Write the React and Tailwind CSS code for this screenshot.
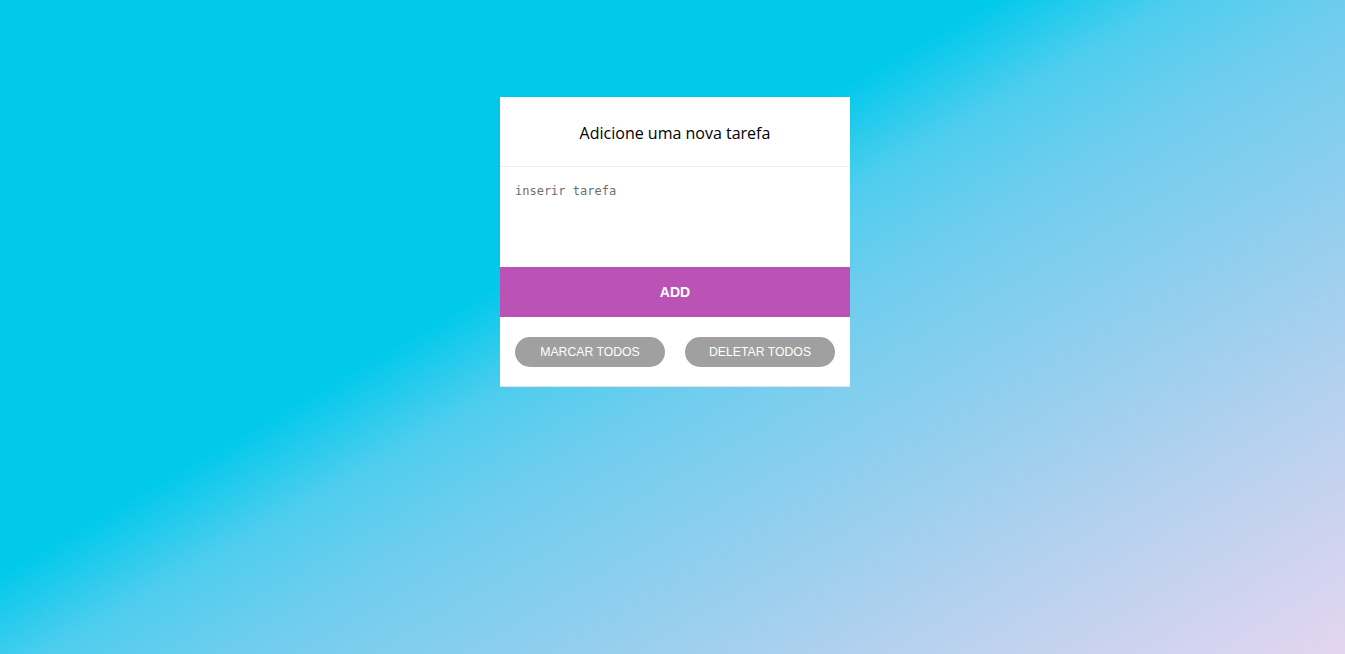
import React, { useState } from 'react';

const App = () => {
  const [tarefa, setTarefa] = useState('');

  return (
    <div className="min-h-screen w-full bg-[linear-gradient(150deg,#00c9eb_40%,#4ecdee_47.5%,#6fcdee_55%,#9ccfee_72%,#e4d5f0_100%)] flex items-start justify-center pt-[97px] pl-[5px]">
      <div className="w-[350px] bg-white flex flex-col border-b border-[#e6e6e6]">
        <div className="h-[70px] flex items-center justify-center border-b border-[#ececec]">
          <h1 className="text-[16px] text-black font-['Open_Sans',sans-serif] pt-[2px]">Adicione uma nova tarefa</h1>
        </div>
        <textarea
          className="h-[100px] w-full resize-none outline-none px-[15px] pt-[15px] text-[12px] text-[#555] placeholder-[#6e6e6e] font-['DejaVu_Sans_Mono',monospace]"
          placeholder="inserir tarefa"
          value={tarefa}
          onChange={(e) => setTarefa(e.target.value)}
        />
        <button className="h-[50px] w-full bg-[#ba53b5] text-white font-bold text-[14px] font-['Liberation_Sans',Arial,sans-serif]">
          ADD
        </button>
        <div className="h-[69px] flex items-center justify-between px-[15px] pt-[1px]">
          <button className="w-[150px] h-[30px] rounded-full bg-[#a0a0a0] text-white text-[12.25px] font-['Liberation_Sans',Arial,sans-serif]">
            MARCAR TODOS
          </button>
          <button className="w-[150px] h-[30px] rounded-full bg-[#a0a0a0] text-white text-[12.25px] font-['Liberation_Sans',Arial,sans-serif]">
            DELETAR TODOS
          </button>
        </div>
      </div>
    </div>
  );
};

export default App;
